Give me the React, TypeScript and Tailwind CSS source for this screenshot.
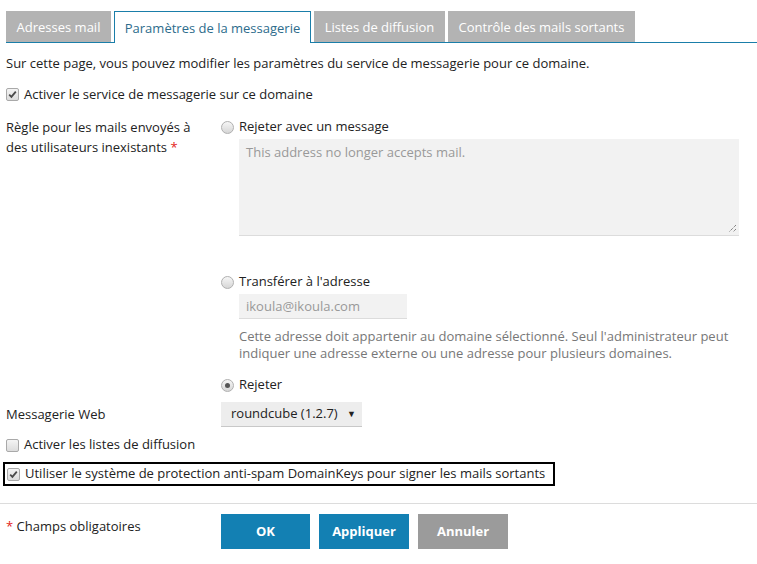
const tabs = [
    { label: "Adresses mail", active: false, width: "w-[105px]" },
    { label: "Paramètres de la messagerie", active: true, width: "w-[197px]" },
    { label: "Listes de diffusion", active: false, width: "w-[131px]" },
    { label: "Contrôle des mails sortants", active: false, width: "w-[187px]" },
];

const Checkbox = ({ checked }: { checked: boolean }) => (
    <span className="inline-flex items-center justify-center w-[13px] h-[13px] rounded-[2px] border border-[#a9a9a9] bg-gradient-to-b from-[#f4f4f4] to-[#dcdcdc] shrink-0">
        {checked && (
            <svg width="9" height="9" viewBox="0 0 9 9">
                <path d="M1.2 4.6 L3.4 6.8 L7.8 1.6" fill="none" stroke="#4a4a4a" strokeWidth="1.8" />
            </svg>
        )}
    </span>
);

const Radio = ({ checked }: { checked: boolean }) => (
    <span className="inline-flex items-center justify-center w-[13px] h-[13px] rounded-full border border-[#b0b0b0] bg-gradient-to-b from-[#f6f6f6] to-[#d6d6d6] shrink-0">
        {checked && <span className="w-[5px] h-[5px] rounded-full bg-[#555]" />}
    </span>
);

const App = () => {
    return (
        <div className="font-['Open_Sans',sans-serif] text-[13px] text-[#222] bg-white min-h-[564px] w-[757px] pl-[6px] overflow-hidden">
            {/* Tabs */}
            <div className="flex items-end gap-[3px] mt-[11px] border-b border-[#1a7ea9] h-[32px]">
                {tabs.map((tab) =>
                    tab.active ? (
                        <div
                            key={tab.label}
                            className={`${tab.width} h-[32px] -mb-px pt-px text-center leading-[30px] bg-white border border-b-0 border-[#1a7ea9] text-[#2d6c8c]`}
                        >
                            {tab.label}
                        </div>
                    ) : (
                        <div
                            key={tab.label}
                            className={`${tab.width} h-[31px] pt-px text-center leading-[30px] bg-[#b3b3b3] text-white`}
                        >
                            {tab.label}
                        </div>
                    )
                )}
            </div>

            <p className="mt-[11px] leading-[18px]">
                Sur cette page, vous pouvez modifier les paramètres du service de messagerie pour ce domaine.
            </p>

            <label className="mt-[13px] flex items-center gap-[5px] leading-[18px]">
                <Checkbox checked />
                Activer le service de messagerie sur ce domaine
            </label>

            {/* Rule for non-existent users */}
            <div className="mt-[14px] flex">
                <div className="w-[215px] leading-[20px]">
                    Règle pour les mails envoyés à<br />
                    des utilisateurs inexistants <span className="text-[#e2231a]">*</span>
                </div>
                <div className="flex-1">
                    <label className="flex items-center gap-[5px] h-[20px]">
                        <Radio checked={false} />
                        Rejeter avec un message
                    </label>
                    <div className="relative ml-[18px] mt-[2px] w-[500px] h-[97px] bg-[#f2f2f2] border-b border-[#dcdcdc] px-[7px] pt-[3px] text-[#999] leading-[20px]">
                        This address no longer accepts mail.
                        <svg className="absolute right-[2px] bottom-[2px]" width="9" height="9" viewBox="0 0 9 9">
                            <path d="M8 1 L1 8 M8 5 L5 8" stroke="#555" strokeWidth="1" strokeDasharray="1 1" />
                        </svg>
                    </div>

                    <label className="mt-[36px] flex items-center gap-[5px] h-[20px]">
                        <Radio checked={false} />
                        Transférer à l'adresse
                    </label>
                    <div className="ml-[18px] mt-[2px] w-[168px] h-[25px] bg-[#f2f2f2] border-b border-[#dcdcdc] px-[7px] leading-[24px] text-[#999]">
                        ikoula@ikoula.com
                    </div>
                    <p className="ml-[18px] mt-[9px] w-[500px] leading-[17px] text-[#777]">
                        Cette adresse doit appartenir au domaine sélectionné. Seul l'administrateur peut indiquer une adresse externe ou une adresse pour plusieurs domaines.
                    </p>

                    <label className="mt-[13px] flex items-center gap-[5px] h-[20px]">
                        <Radio checked />
                        Rejeter
                    </label>
                </div>
            </div>

            {/* Webmail */}
            <div className="mt-[7px] flex items-center">
                <div className="w-[215px]">Messagerie Web</div>
                <div className="w-[141px] h-[25px] bg-[#ededed] border-b border-[#c8c8c8] flex items-center justify-between pl-[10px] pr-[6px]">
                    <span>roundcube (1.2.7)</span>
                    <span className="text-[9px] text-[#222]">▼</span>
                </div>
            </div>

            <label className="mt-[8px] flex items-center gap-[5px] h-[20px]">
                <Checkbox checked={false} />
                Activer les listes de diffusion
            </label>

            <div className="mt-[7px] -ml-[3px] inline-flex items-center gap-[5px] h-[24px] border-2 border-black pl-[2px] pr-[8px]">
                <Checkbox checked />
                Utiliser le système de protection anti-spam DomainKeys pour signer les mails sortants
            </div>

            <div className="mt-[17px] -ml-[6px] border-t border-[#dcdcdc]" />

            {/* Footer */}
            <div className="mt-[10px] flex items-start">
                <div className="w-[215px] pt-[3px] leading-[18px]">
                    <span className="text-[#e2231a]">*</span> Champs obligatoires
                </div>
                <div className="flex gap-[9px]">
                    <button className="w-[89px] h-[35px] pt-px bg-[#1380b3] text-white font-bold">OK</button>
                    <button className="w-[90px] h-[35px] pt-px bg-[#1380b3] text-white font-bold">Appliquer</button>
                    <button className="w-[90px] h-[35px] pt-px bg-[#9b9b9b] text-white font-bold">Annuler</button>
                </div>
            </div>
        </div>
    );
};

export default App;
